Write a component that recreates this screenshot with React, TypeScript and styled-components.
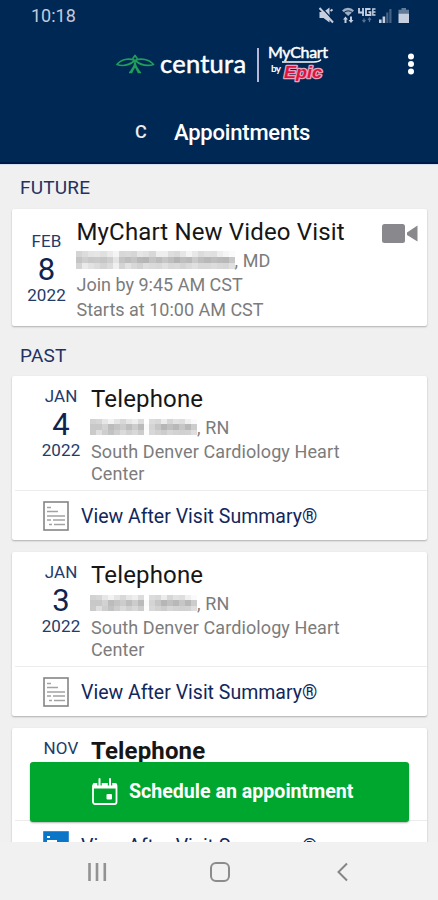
import React from "react";
import styled, { createGlobalStyle } from "styled-components";

const navy = "#002855";

const GlobalStyle = createGlobalStyle`
  *, *::before, *::after { box-sizing: border-box; }
  body { margin: 0; background: #f0f0f0; font-family: Roboto, "Liberation Sans", sans-serif; }
`;

const Screen = styled.div`
  width: 438px;
  height: 900px;
  display: flex;
  flex-direction: column;
  overflow: hidden;
  background: #f0f0f0;
`;

const Header = styled.header`
  flex: none;
  height: 165px;
  background: ${navy};
  border-bottom: 1px solid #d3dfea;
  box-shadow: inset 0 -2px 0 #001747;
  color: #fff;
`;

const StatusBar = styled.div`
  height: 32px;
  padding: 0 28px 0 31px;
  display: flex;
  justify-content: space-between;
  align-items: center;
`;

const Clock = styled.span`
  font-size: 18px;
  color: #c3cbdc;
  line-height: 32px;
`;

const StatusIcons = styled.svg`
  width: 92px;
  height: 20px;
  display: block;
`;

const BrandRow = styled.div`
  height: 66px;
  display: flex;
  align-items: center;
  padding: 0 20px 0 115px;
`;

const Leaf = styled.svg`
  width: 41px;
  height: 22px;
  flex: none;
`;

const Centura = styled.span`
  width: 101px;
  padding: 0 0 5px 4px;
  font: 400 25.5px/30px Lato, sans-serif;
  letter-spacing: 0.25px;
  -webkit-text-stroke: 0.5px #fff;
  white-space: nowrap;
`;

const BrandRule = styled.span`
  width: 2px;
  height: 34px;
  background: #b9b8d4;
`;

const MyChartLogo = styled.svg`
  width: 66px;
  height: 42px;
  margin-left: 7px;
  flex: none;
`;

const MoreButton = styled.button`
  margin-left: auto;
  border: 0;
  padding: 0;
  background: none;
  width: 14px;
  height: 24px;
  color: #fff;
`;

const TitleRow = styled.div`
  height: 66px;
  display: flex;
  align-items: center;
  padding: 1px 0 0 135px;
`;

const Initial = styled.span`
  width: 39px;
  font-size: 18px;
  font-weight: 500;
  color: #e6ebf5;
`;

const Title = styled.h1`
  margin: 0;
  padding-top: 2px;
  font-size: 22px;
  line-height: 28px;
  font-weight: 500;
  letter-spacing: -0.2px;
`;

const List = styled.main`
  flex: 1;
  min-height: 0;
  overflow: hidden;
  padding: 0 11px 0 12px;
`;

const SectionTitle = styled.h2<{ $height: number; $line: number }>`
  margin: 0;
  padding: 0 8px;
  height: ${(p) => p.$height}px;
  line-height: ${(p) => p.$line}px;
  font-size: 19px;
  font-weight: 400;
  letter-spacing: 0.2px;
  color: #1f3263;
`;

const Card = styled.article<{ $height: number }>`
  height: ${(p) => p.$height}px;
  margin-bottom: 12px;
  background: #fff;
  border-radius: 2px;
  box-shadow: 0 1px 2px rgba(0, 0, 0, 0.28);
  overflow: hidden;
`;

const Visit = styled.div<{ $height: number; $indent: number }>`
  display: flex;
  height: ${(p) => p.$height}px;
  padding-left: ${(p) => p.$indent}px;
`;

const DateBlock = styled.div<{ $drop?: boolean }>`
  width: 60px;
  flex: none;
  padding-top: ${(p) => (p.$drop ? 23 : 11)}px;
  display: flex;
  flex-direction: column;
  align-items: center;
  color: #243a69;
  font-size: 17px;
  line-height: 18px;
  letter-spacing: 0.1px;
`;

const Day = styled.span`
  font-size: 31px;
  height: 36px;
  line-height: 39px;
  color: #0f2350;
`;

const Details = styled.div`
  flex: 1;
  min-width: 0;
  color: #7c7c7c;
  font-size: 18px;
  letter-spacing: 0.1px;
`;

const VisitTitle = styled.h3<{ $bold?: boolean }>`
  margin: 0;
  padding-top: 7px;
  height: 39px;
  font-size: 24px;
  line-height: 32px;
  font-weight: ${(p) => (p.$bold ? 700 : 400)};
  letter-spacing: 0.15px;
  color: #161616;
  white-space: nowrap;
`;

const Provider = styled.div`
  display: flex;
  height: 25px;
  align-items: center;
  line-height: 23px;
  padding-bottom: 1px;
`;

const Mosaic = styled.svg`
  flex: none;
  display: block;
  margin-left: -1px;
`;

const Line = styled.div<{ $h: number; $tight?: boolean }>`
  height: ${(p) => p.$h}px;
  line-height: ${(p) => p.$h}px;
  letter-spacing: ${(p) => (p.$tight ? 0 : 0.1)}px;
  white-space: nowrap;
`;

const CameraSlot = styled.div`
  padding: 14px 8px 0 0;
`;

const SummaryRow = styled.a`
  display: flex;
  align-items: center;
  height: 50px;
  margin-left: 3px;
  padding-left: 28px;
  border-top: 1px solid #ececec;
  color: #12275a;
  font-size: 19.5px;
  white-space: nowrap;
`;

const SummaryText = styled.span`
  margin-left: 12px;
  padding-top: 2px;
  line-height: 24px;
`;

const ScheduleButton = styled.button`
  position: absolute;
  left: 30px;
  top: 762px;
  width: 379px;
  height: 60px;
  padding: 0 0 0 61px;
  display: flex;
  align-items: center;
  gap: 11px;
  border: 0;
  border-radius: 3px;
  background: #00a72f;
  box-shadow: 0 1px 2px rgba(0, 0, 0, 0.3);
  color: #fff;
  font: 700 19.6px/24px Roboto, sans-serif;
  white-space: nowrap;
`;

const NavBar = styled.nav`
  flex: none;
  height: 58px;
  display: grid;
  grid-template-columns: 122.5px 122.5px 22px;
  align-items: center;
  padding: 2px 0 0 86px;
  background: #f1f1f1;
`;

const longShades = [
  "d4d4d4 dcdcdc e4e4e4 e6e6e6 e0e0e0 eaeaea f4f4f4 d8d8d8 dadada d6d6d6 e6e6e6 e2e2e2 d8d8d8 eeeeee eeeeee dedede dadada e6e6e6 f4f4f4 e8e8e8 dcdcdc e2e2e2 e0e0e0 eeeeee f6f6f6 fbfbfb",
  "c4c4c4 cecece c8c8c8 cacaca c6c6c6 cecece e4e4e4 c4c4c4 bebebe c4c4c4 b8b8b8 b6b6b6 c4c4c4 bcbcbc c6c6c6 bebebe b4b4b4 bebebe bababa cacaca bebebe b8b8b8 bebebe bababa b8b8b8 c8c8c8",
  "d4d4d4 eaeaea e2e2e2 dcdcdc d4d4d4 dcdcdc f0f0f0 d4d4d4 e2e2e2 d8d8d8 d2d2d2 dedede dadada d8d8d8 e0e0e0 d8d8d8 dadada d4d4d4 dadada e0e0e0 d8d8d8 d8d8d8 dcdcdc d8d8d8 d6d6d6 e0e0e0",
];
const shortShades = [
  "d2d2d2 d6d6d6 e6e6e6 f2f2f2 e4e4e4 d8d8d8 e6e6e6 eeeeee dcdcdc ffffff dcdcdc d8d8d8 ececec d6d6d6 e2e2e2 dedede f0f0f0 fafafa",
  "c8c8c8 c8c8c8 d2d2d2 bcbcbc c4c4c4 cccccc bebebe cccccc bababa fafafa d4d4d4 c6c6c6 b6b6b6 c0c0c0 b8b8b8 c6c6c6 b8b8b8 cccccc",
  "cacaca dedede cecece c2c2c2 cecece dadada d0d0d0 d8d8d8 cccccc fcfcfc d8d8d8 d2d2d2 cccccc d6d6d6 d2d2d2 d0d0d0 d2d2d2 dedede",
];

function Redacted({ width, height, shades }: { width: number; height: number; shades: string[] }) {
  return (
    <Mosaic
      width={width}
      height={height}
      preserveAspectRatio="none"
      viewBox={`0 0 ${shades[0].split(" ").length} 3`}
      shapeRendering="crispEdges"
    >
      {shades.map((row, y) =>
        row.split(" ").map((c, x) => <rect key={`${x}-${y}`} x={x} y={y} width={1} height={1} fill={`#${c}`} />)
      )}
    </Mosaic>
  );
}

function DocIcon({ unread }: { unread?: boolean }) {
  return (
    <svg width="26" height="30" viewBox="0 0 26 30">
      <rect
        x="1"
        y="1"
        width="24"
        height="28"
        fill={unread ? "#0a76c8" : "#fff"}
        stroke={unread ? "#0a76c8" : "#858585"}
        strokeWidth="1.6"
      />
      <path
        d={unread ? "M4 6h3M4 10h10M4 14h18" : "M4 6.5h4M4 10.5h11M4 15h18M4 19h4M10 19h12M6 23.5h3M11 23.5h11"}
        stroke={unread ? "#fff" : "#a2a2a2"}
        strokeWidth={unread ? 2.2 : 1.3}
      />
    </svg>
  );
}

function StatusGlyphs() {
  return (
    <StatusIcons viewBox="0 0 92 20">
      <g fill="#c6cfdf">
        <path d="M1.500 6H5.500l6-4.500v15L5.500 12H1.500z" />
        <path d="M24 4.500a8 8 0 0 1 12 0L30.200 10z" opacity=".8" />
        <path d="M27.500 10.500l2.500 3h-1.500v3.500h-2v-3.500H25zM33 17l-2.500-3H32v-3.500h2V14h1.500z" />
        <path d="M61 13.500h2.600V17H61zM64.600 10.500h2.600V17h-2.600z" />
        <path d="M68.200 6.500h2.200V17h-2.200zM71.300 3h2.200v14h-2.200z" opacity=".35" />
        <path d="M80.500 7.500h10.500V17H80.500z" />
        <path d="M83.500 2h4.500v1.800h3v3.700H80.500V3.800h3z" opacity=".5" />
      </g>
      <path d="M3 1l12 13" stroke={navy} strokeWidth="1.200" />
      <path d="M1.500 2l13.500 14.500M12.500 5l2-1.500" stroke="#c6cfdf" strokeWidth="2" />
      <path d="M26 6.500q4.200-3.300 8.400 0" fill="none" stroke={navy} strokeWidth="1" />
      <g fill="none" stroke="#c6cfdf" strokeWidth="1.800">
        <path d="M41 2v4.500h5M45 2v8M52.500 3h-4.500v6h4.500V6.200h-2" />
        <path d="M57.500 3h-2.700v6h2.700M54.500 6h3" strokeWidth="1.400" />
      </g>
      <path
        d="M46 16v-3.500M44.500 14l1.500 2 1.500-2M51.500 12v4M50 14l1.500-2 1.500 2"
        fill="none"
        stroke="#5a7192"
        strokeWidth="1.200"
      />
    </StatusIcons>
  );
}

interface PastVisit {
  month: string;
  day?: string;
  unread?: boolean;
}

const past: PastVisit[] = [
  { month: "JAN", day: "4" },
  { month: "JAN", day: "3" },
  { month: "NOV", unread: true },
];

function PastCard({ month, day, unread }: PastVisit) {
  return (
    <Card $height={unread ? 142 : 164}>
      <Visit $height={unread ? 92 : 114} $indent={19}>
        <DateBlock>
          <span>{month}</span>
          {day && <Day>{day}</Day>}
          {day && <span>2022</span>}
        </DateBlock>
        <Details>
          <VisitTitle $bold={unread}>Telephone</VisitTitle>
          {day && (
            <>
              <Provider>
                <Redacted width={107} height={16} shades={shortShades} />, RN
              </Provider>
              <Line $h={24}>South Denver Cardiology Heart</Line>
              <Line $h={19}>Center</Line>
            </>
          )}
        </Details>
      </Visit>
      <SummaryRow>
        <DocIcon unread={unread} />
        <SummaryText>View After Visit Summary®</SummaryText>
      </SummaryRow>
    </Card>
  );
}

export default function App() {
  return (
    <Screen>
      <GlobalStyle />
      <Header>
        <StatusBar>
          <Clock>10:18</Clock>
          <StatusGlyphs />
        </StatusBar>
        <BrandRow>
          <Leaf viewBox="0 0 41 22" fill="none" stroke="#1f9f58" strokeWidth="1.700" strokeLinejoin="round">
            <path d="M20 6.500C14 4 6 5 2 10.500c7 2.500 13 0 18-4z" />
            <path d="M20 6.500c6-2.500 14-1.500 18.500 4C31 13 25 10.500 20 6.500z" />
            <path d="M17.500 5L20 1.500 22.500 5M20 6c1 5-2 8-5 12.500M20 6c-1 5 2 8 5 12.500M14 18.500h2.500l3.500-7 3.500 7H26" />
          </Leaf>
          <Centura>centura</Centura>
          <BrandRule />
          <MyChartLogo viewBox="0 0 66 42">
            <g fontFamily="Lato, sans-serif" fill="#fff">
              <text x="2" y="14" fontSize="16" fontWeight="400" textLength="60" stroke="#fff" strokeWidth=".5">MyChart</text>
              <text x="5" y="28" fontSize="10" fontWeight="700" textLength="10">by</text>
            </g>
            <path d="M16 18h32q5 0 7-2.500" fill="none" stroke="#fff" strokeWidth="1.300" />
            <text
              x="18"
              y="33.500"
              fontFamily="Liberation Sans, sans-serif"
              fontSize="16"
              fontWeight="700"
              fontStyle="italic"
              textLength="38"
              lengthAdjust="spacingAndGlyphs"
              fill="#e0123f"
              stroke="#e3a3bb"
              strokeWidth="2.500"
              strokeLinejoin="round"
              paintOrder="stroke"
            >
              Epic
            </text>
          </MyChartLogo>
          <MoreButton aria-label="More options">
            <svg width="14" height="24" fill="currentColor">
              <circle cx="7" cy="3.5" r="3" />
              <circle cx="7" cy="11" r="3" />
              <circle cx="7" cy="18.5" r="3" />
            </svg>
          </MoreButton>
        </BrandRow>
        <TitleRow>
          <Initial>C</Initial>
          <Title>Appointments</Title>
        </TitleRow>
      </Header>
      <List>
        <SectionTitle $height={44} $line={46}>FUTURE</SectionTitle>
        <Card $height={117}>
          <Visit $height={117} $indent={4.5}>
            <DateBlock $drop>
              <span>FEB</span>
              <Day>8</Day>
              <span>2022</span>
            </DateBlock>
            <Details>
              <VisitTitle>MyChart New Video Visit</VisitTitle>
              <Provider>
                <Redacted width={159} height={18} shades={longShades} />, MD
              </Provider>
              <Line $h={24} $tight>Join by 9:45 AM CST</Line>
              <Line $h={25} $tight>Starts at 10:00 AM CST</Line>
            </Details>
            <CameraSlot>
              <svg width="37" height="21" fill="#89898d">
                <rect x="0" y="1" width="23" height="19" rx="2.5" />
                <path d="M25 9.500L35.500 2.500v16L25 12z" />
              </svg>
            </CameraSlot>
          </Visit>
        </Card>
        <SectionTitle $height={38} $line={35}>PAST</SectionTitle>
        {past.map((v) => (
          <PastCard key={`${v.month}${v.day ?? ""}`} {...v} />
        ))}
      </List>
      <ScheduleButton>
        <svg width="27" height="28" viewBox="0 0 27 28" fill="none" stroke="#fff">
          <rect x="2" y="6" width="23.500" height="20" rx="2" strokeWidth="1.800" />
          <path d="M2 5.500h23.500v5H2z" fill="#fff" stroke="none" />
          <path d="M8.500 1v6.500M19 1v6.500" stroke="#00a72f" strokeWidth="4.500" />
          <path d="M8.500 1v7M19 1v7" strokeWidth="2" strokeLinecap="round" />
          <rect x="15.500" y="16" width="5.500" height="5.500" rx="1" fill="#fff" stroke="none" />
        </svg>
        Schedule an appointment
      </ScheduleButton>
      <NavBar>
        <svg width="22" height="20" stroke="#929292" strokeWidth="2.6">
          <path d="M3.500 1v18M11 1v18M18.800 1v18" />
        </svg>
        <svg width="22" height="22" fill="none" stroke="#8b8b8b" strokeWidth="2">
          <rect x="2" y="2" width="18" height="18" rx="5" />
        </svg>
        <svg width="22" height="20" fill="none" stroke="#858585" strokeWidth="2">
          <path d="M16 1.500L7.500 10l8.500 8.500" />
        </svg>
      </NavBar>
    </Screen>
  );
}
